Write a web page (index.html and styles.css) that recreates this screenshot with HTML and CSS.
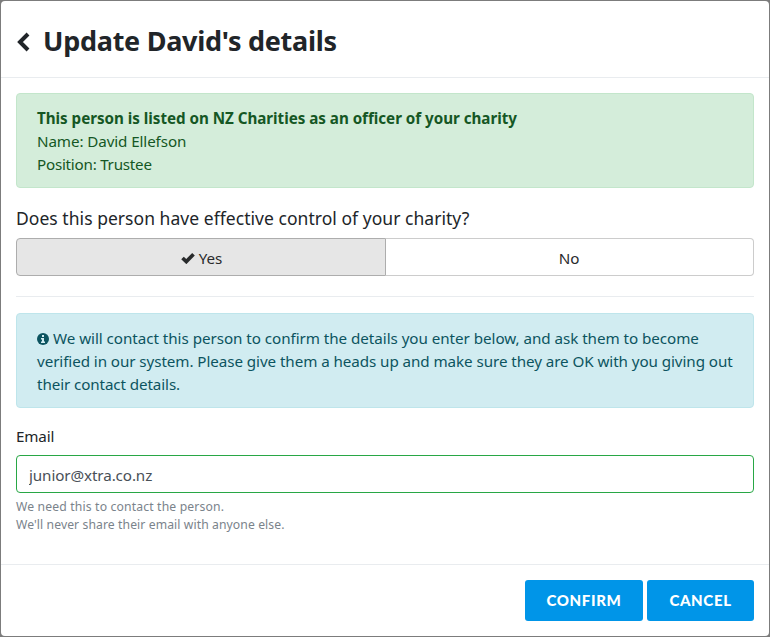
FILE: index.html
```html
<!DOCTYPE html>
<html lang="en">
<head>
<meta charset="utf-8">
<title>Update David's details</title>
<link rel="stylesheet" href="styles.css">
</head>
<body>
<main class="modal">
  <header class="modal-header">
    <svg class="back" viewBox="0 0 14 20" width="14" height="20"><path d="M12 2 4 10l8 8" fill="none" stroke="currentColor" stroke-width="4"/></svg>
    <h1 class="title">Update David's details</h1>
  </header>
  <section class="modal-body">
    <div class="alert success">
      <strong class="lead">This person is listed on NZ Charities as an officer of your charity</strong>
      <div><span class="name">Name: David Ellefson</span></div>
      <div><span class="position">Position: Trustee</span></div>
    </div>
    <div class="question"><span>Does this person have effective control of your charity?</span></div>
    <div class="choices">
      <button class="choice active"><svg class="check" viewBox="0 0 14 12" width="14" height="12"><path d="M1.5 6 5.3 9.6 12.5 2.3" fill="none" stroke="currentColor" stroke-width="3.7"/></svg><span>Yes</span></button>
      <button class="choice"><span>No</span></button>
    </div>
    <hr class="rule">
    <div class="alert info">
      <div><svg class="info-icon" viewBox="0 0 12 12" width="12" height="12"><circle cx="6" cy="6" r="6" fill="currentColor"/><path d="M5 2h2v2H5zM4 5h3v3.5h1V10H4V8.5h1v-2H4z" fill="#d1ecf1"/></svg><span class="info-a">We will contact this person to confirm the details you enter below, and ask them to become</span></div>
      <div><span class="info-b">verified in our system. Please give them a heads up and make sure they are OK with you giving out</span></div>
      <div><span class="info-c">their contact details.</span></div>
    </div>
    <label class="label" for="email">Email</label>
    <input class="field" id="email" type="text" value="junior@xtra.co.nz">
    <div class="help"><span class="help-a">We need this to contact the person.</span></div>
    <div class="help"><span class="help-b">We'll never share their email with anyone else.</span></div>
  </section>
  <footer class="modal-footer">
    <button class="action confirm">CONFIRM</button>
    <button class="action cancel">CANCEL</button>
  </footer>
</main>
</body>
</html>
```
FILE: styles.css
```css
* { box-sizing: border-box; }
body {
  margin: 0;
  background: #7c7c7c;
  color: #212529;
  font: 15.2px/23px "Noto Sans", "Open Sans", sans-serif;
  white-space: nowrap;
}
.modal {
  display: flex;
  flex-direction: column;
  width: 768px;
  height: 635px;
  margin: 1px;
  background: #fff;
  border-radius: 4px;
}
.modal-header {
  display: flex;
  align-items: center;
  height: 77px;
  padding: 4px 15px 0;
  border-bottom: 1px solid #e9ecef;
}
.back { margin-top: 1px; }
.title {
  margin: 0 0 0 13px;
  font-size: 27px;
  line-height: 34px;
  font-weight: 700;
  letter-spacing: -0.27px;
}
.modal-body { flex: 1; padding: 15px 15px 0; }
.alert {
  height: 95px;
  padding: 13px 20px 0;
  border: 1px solid;
  border-radius: 4px;
}
.success { color: #155724; background: #d4edda; border-color: #c3e6cb; }
.info { color: #0c5460; background: #d1ecf1; border-color: #bee5eb; }
.lead { display: block; width: max-content; letter-spacing: -0.03px; }
.name { letter-spacing: -0.1px; }
.position { letter-spacing: -0.24px; }
.info-a { letter-spacing: -0.045px; }
.info-b { letter-spacing: -0.072px; }
.info-c { letter-spacing: -0.1px; }
.question {
  height: 50px;
  padding-top: 18px;
  font-size: 17.5px;
  line-height: 24px;
  letter-spacing: 0.04px;
}
.choices { display: flex; height: 38px; }
.choice {
  display: flex;
  justify-content: center;
  align-items: center;
  gap: 4px;
  width: 368px;
  padding: 2px 1px 0 0;
  border: 1px solid #ccc;
  border-left: 0;
  border-radius: 0 4px 4px 0;
  background: #fff;
  color: #292b2c;
  font: inherit;
}
.active {
  width: 370px;
  padding: 2px 0 0 1px;
  border: 1px solid #adadad;
  border-radius: 4px 0 0 4px;
  background: #e6e6e6;
}
.rule { height: 1px; margin: 20px 0 16px; border: 0; background: #e9ecef; }
.info-icon { margin-right: 4px; vertical-align: -1px; }
.label { display: block; width: max-content; margin-top: 17px; letter-spacing: -0.15px; }
.field {
  display: block;
  width: 100%;
  height: 38px;
  margin: 7px 0 5px;
  padding: 1px 12px 0 12px;
  border: 1px solid #28a745;
  border-radius: 4px;
  color: #495057;
  font: inherit;
  letter-spacing: -0.1px;
  outline: 0;
}
.help { color: #7a838b; font-size: 12.2px; line-height: 18px; }
.help-a { letter-spacing: 0.15px; }
.help-b { letter-spacing: 0.085px; }
.modal-footer {
  display: flex;
  justify-content: flex-end;
  gap: 4px;
  height: 72px;
  padding: 15px;
  border-top: 1px solid #e9ecef;
}
.action {
  width: 118px;
  height: 41px;
  padding: 0;
  border: 0;
  border-radius: 3px;
  background: #0095e8;
  color: #fff;
  font: 900 15px/41px Lato, sans-serif;
  letter-spacing: 0.65px;
}
.cancel { width: 107px; }
```
